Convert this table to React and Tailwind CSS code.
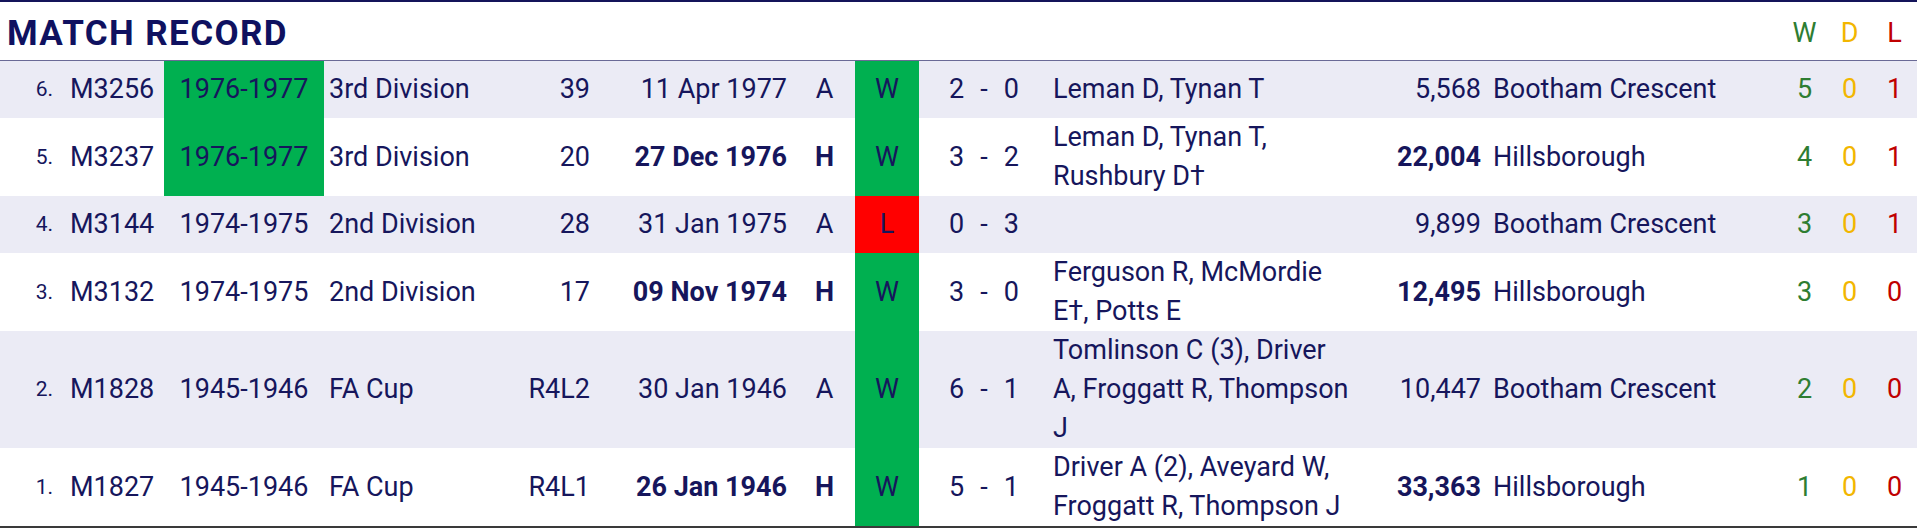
import React from "react";

const rows = [
  { n: "6.", id: "M3256", season: "1976-1977", seasonHi: true, comp: "3rd Division", rnd: "39", date: "11 Apr 1977", ha: "A", res: "W", score: ["2", "0"], scorers: ["Leman D, Tynan T"], att: "5,568", venue: "Bootham Crescent", w: 5, d: 0, l: 1 },
  { n: "5.", id: "M3237", season: "1976-1977", seasonHi: true, comp: "3rd Division", rnd: "20", date: "27 Dec 1976", ha: "H", res: "W", score: ["3", "2"], scorers: ["Leman D, Tynan T,", "Rushbury D†"], att: "22,004", venue: "Hillsborough", w: 4, d: 0, l: 1 },
  { n: "4.", id: "M3144", season: "1974-1975", comp: "2nd Division", rnd: "28", date: "31 Jan 1975", ha: "A", res: "L", score: ["0", "3"], scorers: [], att: "9,899", venue: "Bootham Crescent", w: 3, d: 0, l: 1 },
  { n: "3.", id: "M3132", season: "1974-1975", comp: "2nd Division", rnd: "17", date: "09 Nov 1974", ha: "H", res: "W", score: ["3", "0"], scorers: ["Ferguson R, McMordie", "E†, Potts E"], att: "12,495", venue: "Hillsborough", w: 3, d: 0, l: 0 },
  { n: "2.", id: "M1828", season: "1945-1946", comp: "FA Cup", rnd: "R4L2", date: "30 Jan 1946", ha: "A", res: "W", score: ["6", "1"], scorers: ["Tomlinson C (3), Driver", "A, Froggatt R, Thompson", "J"], att: "10,447", venue: "Bootham Crescent", w: 2, d: 0, l: 0 },
  { n: "1.", id: "M1827", season: "1945-1946", comp: "FA Cup", rnd: "R4L1", date: "26 Jan 1946", ha: "H", res: "W", score: ["5", "1"], scorers: ["Driver A (2), Aveyard W,", "Froggatt R, Thompson J"], att: "33,363", venue: "Hillsborough", w: 1, d: 0, l: 0 },
];

const cols = "grid grid-cols-[62px_102px_160px_176px_98px_196px_61px_64px_134px_327px_107px_295px_45px_45px_45px]";

function Row({ r, shaded }) {
  const home = r.ha === "H";
  const weight = home ? "font-bold" : "";
  return (
    <div className={`${cols} min-h-[57px] ${shaded ? "bg-[#ebebf5]" : "bg-white"}`}>
      <div className="flex items-center justify-end pr-[9px] text-[21px]">{r.n}</div>
      <div className="flex items-center pl-[8px]">{r.id}</div>
      <div className={`flex items-center justify-center ${r.seasonHi ? "bg-[#00b050]" : ""}`}>{r.season}</div>
      <div className="flex items-center pl-[5px]">{r.comp}</div>
      <div className="flex items-center justify-end pr-[8px]">{r.rnd}</div>
      <div className={`flex items-center justify-end pr-[7px] ${weight}`}>{r.date}</div>
      <div className={`flex items-center justify-center ${weight}`}>{r.ha}</div>
      <div className={`flex items-center justify-center ${r.res === "W" ? "bg-[#00b050]" : "bg-[#ff0000]"}`}>{r.res}</div>
      <div className="flex items-center gap-[16px] pl-[30px]">
        <span>{r.score[0]}</span>
        <span>-</span>
        <span>{r.score[1]}</span>
      </div>
      <div className="flex flex-col justify-center">
        {r.scorers.map((s, i) => (
          <span key={i} className="whitespace-nowrap">{s}</span>
        ))}
      </div>
      <div className={`flex items-center justify-end pr-[6px] ${weight}`}>{r.att}</div>
      <div className="flex items-center pl-[6px]">{r.venue}</div>
      <div className="flex items-center justify-center text-[#2e7d32]">{r.w}</div>
      <div className="flex items-center justify-center text-[#f2b600]">{r.d}</div>
      <div className="flex items-center justify-center text-[#c00000]">{r.l}</div>
    </div>
  );
}

export default function App() {
  return (
    <div className="w-[1917px] h-[528px] bg-white text-[#16165c] text-[27px] leading-[39px] font-['Roboto',sans-serif] overflow-hidden">
      <div className="border-t-[2px] border-[#14145a] border-b border-b-[#6a6a96]">
        <div className={`${cols} h-[58px]`}>
          <div className="col-span-11 flex items-center pl-[7px] pt-[4px] text-[35px] tracking-[1.4px] font-bold text-[#0f1160]">MATCH RECORD</div>
          <div />
          <div className="flex items-center justify-center pt-[4px] text-[#2e7d32]">W</div>
          <div className="flex items-center justify-center pt-[4px] text-[#f2b600]">D</div>
          <div className="flex items-center justify-center pt-[4px] text-[#c00000]">L</div>
        </div>
      </div>
      {rows.map((r, i) => (
        <Row key={r.id} r={r} shaded={i % 2 === 0} />
      ))}
      <div className="border-b-[2px] border-[#3a3a3a]" />
    </div>
  );
}
